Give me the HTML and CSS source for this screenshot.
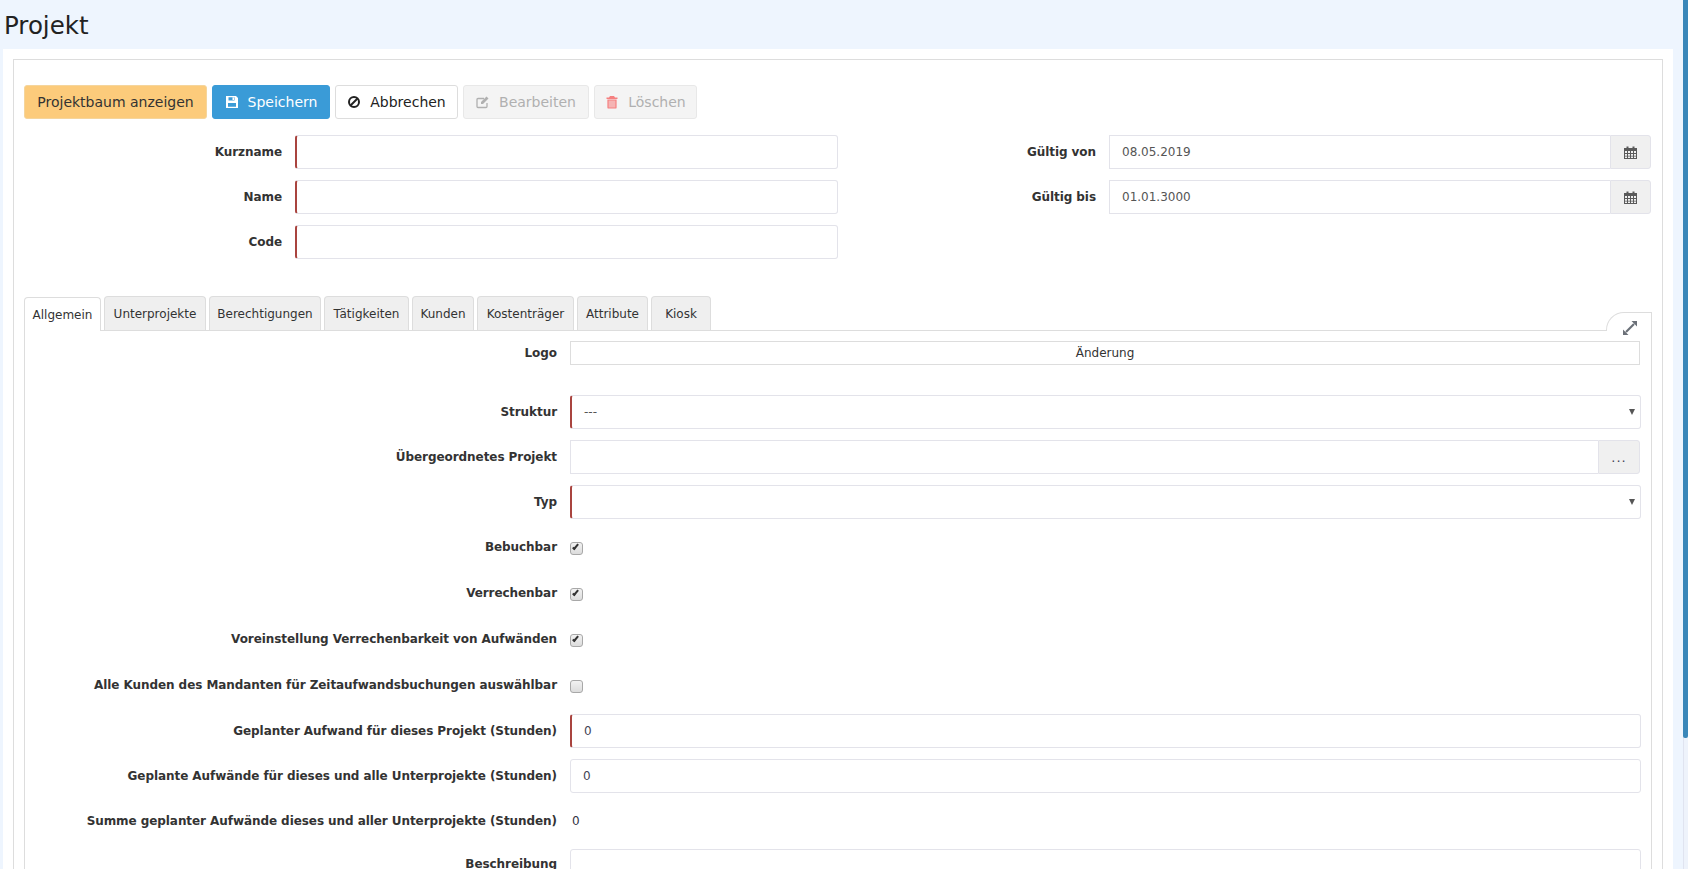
FILE: index.html
```html
<!DOCTYPE html>
<html lang="de">
<head>
    <meta charset="UTF-8">
    <title>Projekt</title>
    <link rel="stylesheet" href="styles.css">
</head>
<body>
    <div class="page">
        <h1 class="page-title">Projekt</h1>
        <div class="panel">
            <div class="box">
                <div class="toolbar">
                    <button class="btn btn-orange">Projektbaum anzeigen</button>
                    <button class="btn btn-blue">
                        <svg class="icon" viewBox="0 0 14 14"><path fill="currentColor" fill-rule="evenodd" d="M1 1h10l2 2v10H1zM3.500 2.200v3.300h6V2.200zM7.500 2.600H9v2.400H7.500zM3 8v3.800h8V8z"/></svg>
                        Speichern
                    </button>
                    <button class="btn btn-white">
                        <svg class="icon" viewBox="0 0 14 14"><circle cx="7" cy="7" r="5" fill="none" stroke="currentColor" stroke-width="2"/><path d="M3.500 10.500l7-7" stroke="currentColor" stroke-width="2"/></svg>
                        Abbrechen
                    </button>
                    <button class="btn btn-off">
                        <svg class="icon" viewBox="0 0 14 14"><path fill="none" stroke="currentColor" stroke-width="1.300" d="M11 8v3.500a1 1 0 0 1-1 1H2a1 1 0 0 1-1-1v-7a1 1 0 0 1 1-1h6"/><path fill="currentColor" d="M5 7l5.500-5.500 2 2L7 9H5z"/></svg>
                        Bearbeiten
                    </button>
                    <button class="btn btn-off">
                        <svg class="icon icon-trash" viewBox="0 0 14 14"><path fill="currentColor" d="M5 1h4l1 1.500h2.500V4h-11V2.500H4z"/><path fill="currentColor" fill-opacity="0.550" stroke="currentColor" stroke-width="1.200" d="M3 5h8v7.400a.6.6 0 0 1-.6.6H3.600a.6.6 0 0 1-.6-.6z"/></svg>
                        Löschen
                    </button>
                </div>

                <div class="head-fields">
                    <div class="head-col-left">
                        <div class="row">
                            <label class="lbl lbl-head">Kurzname</label>
                            <div class="input required"></div>
                        </div>
                        <div class="row">
                            <label class="lbl lbl-head">Name</label>
                            <div class="input required"></div>
                        </div>
                        <div class="row">
                            <label class="lbl lbl-head">Code</label>
                            <div class="input required"></div>
                        </div>
                    </div>
                    <div class="head-col-right">
                        <div class="row">
                            <label class="lbl lbl-date">Gültig von</label>
                            <div class="input-group">
                                <div class="input">08.05.2019</div>
                                <span class="addon">
                                    <svg class="cal" viewBox="0 0 13 13"><path fill="currentColor" fill-rule="evenodd" d="M0 2h2.500V0.500h2V2h4V0.500h2V2H13v11H0zM1 5v2h2V5zM4 5v2h2V5zM7 5v2h2V5zM10 5v2h2V5zM1 8v1.800h2V8zM4 8v1.800h2V8zM7 8v1.800h2V8zM10 8v1.800h2V8zM1 10.500V12h2v-1.500zM4 10.500V12h2v-1.500zM7 10.500V12h2v-1.500zM10 10.500V12h2v-1.500z"/></svg>
                                </span>
                            </div>
                        </div>
                        <div class="row">
                            <label class="lbl lbl-date">Gültig bis</label>
                            <div class="input-group">
                                <div class="input">01.01.3000</div>
                                <span class="addon">
                                    <svg class="cal" viewBox="0 0 13 13"><path fill="currentColor" fill-rule="evenodd" d="M0 2h2.500V0.500h2V2h4V0.500h2V2H13v11H0zM1 5v2h2V5zM4 5v2h2V5zM7 5v2h2V5zM10 5v2h2V5zM1 8v1.800h2V8zM4 8v1.800h2V8zM7 8v1.800h2V8zM10 8v1.800h2V8zM1 10.500V12h2v-1.500zM4 10.500V12h2v-1.500zM7 10.500V12h2v-1.500zM10 10.500V12h2v-1.500z"/></svg>
                                </span>
                            </div>
                        </div>
                    </div>
                </div>

                <div class="tabs">
                    <a class="tab active">Allgemein</a>
                    <a class="tab t-unter">Unterprojekte</a>
                    <a class="tab t-ber">Berechtigungen</a>
                    <a class="tab t-tat">Tätigkeiten</a>
                    <a class="tab t-kun">Kunden</a>
                    <a class="tab t-kos">Kostenträger</a>
                    <a class="tab t-att">Attribute</a>
                    <a class="tab t-kio">Kiosk</a>
                    <span class="expand">
                        <svg viewBox="0 0 16 16"><path fill="#6b7078" d="M9.500 1H15v5.500zM1 9.500V15h5.500z"/><path d="M12 4l-8 8" stroke="#6b7078" stroke-width="2.200"/></svg>
                    </span>
                </div>
                <div class="tab-body">
                    <div class="row row-logo">
                        <label class="lbl">Logo</label>
                        <div class="logo-btn">Änderung</div>
                    </div>
                    <div class="row">
                        <label class="lbl">Struktur</label>
                        <div class="input required select">---</div>
                    </div>
                    <div class="row">
                        <label class="lbl">Übergeordnetes Projekt</label>
                        <div class="input-group group-wide">
                            <div class="input"></div>
                            <span class="addon addon-dots">...</span>
                        </div>
                    </div>
                    <div class="row">
                        <label class="lbl">Typ</label>
                        <div class="input required select"></div>
                    </div>
                    <div class="row row-check">
                        <label class="lbl">Bebuchbar</label>
                        <input class="check" type="checkbox" checked>
                    </div>
                    <div class="row row-check">
                        <label class="lbl">Verrechenbar</label>
                        <input class="check" type="checkbox" checked>
                    </div>
                    <div class="row row-check">
                        <label class="lbl">Voreinstellung Verrechenbarkeit von Aufwänden</label>
                        <input class="check" type="checkbox" checked>
                    </div>
                    <div class="row row-check">
                        <label class="lbl">Alle Kunden des Mandanten für Zeitaufwandsbuchungen auswählbar</label>
                        <input class="check" type="checkbox">
                    </div>
                    <div class="row">
                        <label class="lbl">Geplanter Aufwand für dieses Projekt (Stunden)</label>
                        <div class="input required num">0</div>
                    </div>
                    <div class="row">
                        <label class="lbl">Geplante Aufwände für dieses und alle Unterprojekte (Stunden)</label>
                        <div class="input num">0</div>
                    </div>
                    <div class="row">
                        <label class="lbl">Summe geplanter Aufwände dieses und aller Unterprojekte (Stunden)</label>
                        <span class="plain-value">0</span>
                    </div>
                    <div class="row row-last">
                        <label class="lbl">Beschreibung</label>
                        <div class="input textarea"></div>
                    </div>
                </div>
            </div>
        </div>
    </div>
    <div class="scrollbar"><div class="thumb"></div></div>
</body>
</html>
```

FILE: styles.css
```css
html, body {
    height: 100%;
    margin: 0;
    overflow: hidden;
}
body {
    display: flex;
    background-color: #eef5fe;
    font-family: "DejaVu Sans", Verdana, sans-serif;
    font-size: 12px;
    color: #333;
}
.page {
    flex: 1;
    min-width: 0;
}
.page-title {
    margin: 0;
    height: 49px;
    padding-left: 4px;
    font-size: 24.5px;
    font-weight: normal;
    line-height: 52px;
    color: #222;
    box-sizing: border-box;
}
.panel {
    margin: 0 10px 0 3px;
    padding: 10px 10px 0 10px;
    background-color: #fff;
}
.box {
    border: 1px solid #ddd;
    padding: 25px 10px 0 10px;
}

.toolbar {
    display: flex;
    gap: 5px;
    margin-bottom: 16px;
}
.btn {
    display: flex;
    align-items: center;
    justify-content: center;
    gap: 9px;
    height: 34px;
    padding: 0;
    font-family: inherit;
    font-size: 14px;
    border: 1px solid #ddd;
    border-radius: 3px;
    box-sizing: border-box;
}
.btn-orange {
    width: 183px;
    background-color: #fccb7b;
    border-color: #f5d59c;
    color: #333;
}
.btn-blue {
    width: 118px;
    background-color: #3a9bd7;
    border-color: #3a9bd7;
    color: #fff;
}
.btn-white {
    width: 123px;
    background-color: #fff;
    color: #222;
}
.btn-off {
    width: 126px;
    background-color: #f4f4f4;
    border-color: #e8e8e8;
    color: #b0b0b0;
}
.btn-off:last-child {
    width: 103px;
}
.icon {
    width: 14px;
    height: 14px;
}
.icon-trash {
    color: #f58080;
}

.head-fields {
    display: flex;
    margin-bottom: 26px;
}
.head-col-left {
    width: 814px;
}
.head-col-right {
    flex: 1;
    padding-right: 1px;
}
.head-col-right .row {
    justify-content: flex-end;
}
.row {
    display: flex;
    align-items: center;
    height: 34px;
    margin-bottom: 11px;
}
.lbl {
    flex-shrink: 0;
    text-align: right;
    font-weight: bold;
    font-size: 12px;
    letter-spacing: -0.07px;
    color: #333;
    white-space: nowrap;
    width: 520px;
    margin-right: 13px;
}
.lbl-head {
    width: 258px;
}
.lbl-date {
    width: 154px;
}
.input {
    flex: 1;
    height: 34px;
    box-sizing: border-box;
    background-color: #fff;
    border: 1px solid #e3e3ea;
    border-radius: 3px;
    padding-left: 12px;
    line-height: 33px;
    color: #555;
    min-width: 0;
}
.head-col-left .input {
    flex: none;
    width: 543px;
}
.required {
    border-left: 2px solid #a9443f;
}
.input-group {
    flex: none;
    display: flex;
    width: 542px;
}
.input-group .input {
    border-right: none;
    border-radius: 0;
}
.group-wide {
    width: 1070px;
}
.addon {
    flex: none;
    width: 41px;
    height: 34px;
    box-sizing: border-box;
    display: flex;
    align-items: center;
    justify-content: center;
    background-color: #f0f0f0;
    border: 1px solid #e3e3ea;
    border-radius: 0 3px 3px 0;
    color: #5a5a5a;
}
.cal {
    width: 13px;
    height: 13px;
}
.addon-dots {
    width: 42px;
    color: #445;
    font-size: 13px;
    letter-spacing: 1px;
}

.tabs {
    position: relative;
    display: flex;
    align-items: flex-end;
    gap: 3px;
    height: 34px;
}
.tab {
    display: block;
    height: 34px;
    box-sizing: border-box;
    border: 1px solid #ddd;
    border-bottom: none;
    border-radius: 4px 4px 0 0;
    background-color: #efefef;
    font-size: 12px;
    line-height: 35px;
    text-align: center;
    color: #333;
}
.tab.active {
    width: 77px;
    background-color: #fff;
    position: relative;
    top: 1px;
}
.t-unter { width: 102px; }
.t-ber { width: 112px; }
.t-tat { width: 85px; }
.t-kun { width: 62px; }
.t-kos { width: 97px; }
.t-att { width: 71px; }
.t-kio { width: 60px; }
.expand {
    position: absolute;
    right: 0;
    top: 16px;
    width: 46px;
    height: 19px;
    box-sizing: border-box;
    background-color: #fff;
    border: 1px solid #ddd;
    border-bottom: none;
    border-radius: 18px 0 0 0;
}
.expand svg {
    position: absolute;
    left: 15px;
    top: 7px;
    width: 16px;
    height: 16px;
}
.tab-body {
    border: 1px solid #ddd;
    border-bottom: none;
    padding: 10px 10px 0 12px;
    height: 560px;
    box-sizing: border-box;
}
.row-logo {
    height: 24px;
    margin-bottom: 30px;
}
.logo-btn {
    flex: none;
    width: 1070px;
    height: 24px;
    box-sizing: border-box;
    border: 1px solid #ddd;
    text-align: center;
    line-height: 22px;
    font-size: 12px;
    color: #333;
}
.select {
    position: relative;
}
.select::after {
    content: "";
    position: absolute;
    right: 5px;
    top: 13px;
    border-left: 3px solid transparent;
    border-right: 3px solid transparent;
    border-top: 6px solid #555;
}
.row-check {
    margin-bottom: 12px;
}
.check {
    appearance: none;
    margin: 0;
    width: 13px;
    height: 13px;
    position: relative;
    top: 1px;
    box-sizing: border-box;
    background: linear-gradient(#f2f2f2, #dcdcdc);
    border: 1px solid #a8a8a8;
    border-radius: 3px;
}
.check:checked::after {
    content: "";
    position: absolute;
    left: 3px;
    top: 0;
    width: 3px;
    height: 7px;
    border-right: 2px solid #333;
    border-bottom: 2px solid #333;
    box-sizing: border-box;
    transform: rotate(40deg);
}
.num {
    color: #445;
}
.plain-value {
    padding-left: 2px;
    color: #334;
}
.row-last {
    align-items: flex-start;
    height: 90px;
}
.row-last .lbl {
    margin-top: 8px;
}
.textarea {
    height: 80px;
    flex: 1;
}

.scrollbar {
    flex: none;
    width: 5px;
    background-color: #eef3fb;
    border-left: 1px solid #e0e4f0;
    box-sizing: border-box;
}
.thumb {
    height: 738px;
    margin-left: -1px;
    background-color: #3a87b9;
    border-radius: 0 0 2px 2px;
}
```
